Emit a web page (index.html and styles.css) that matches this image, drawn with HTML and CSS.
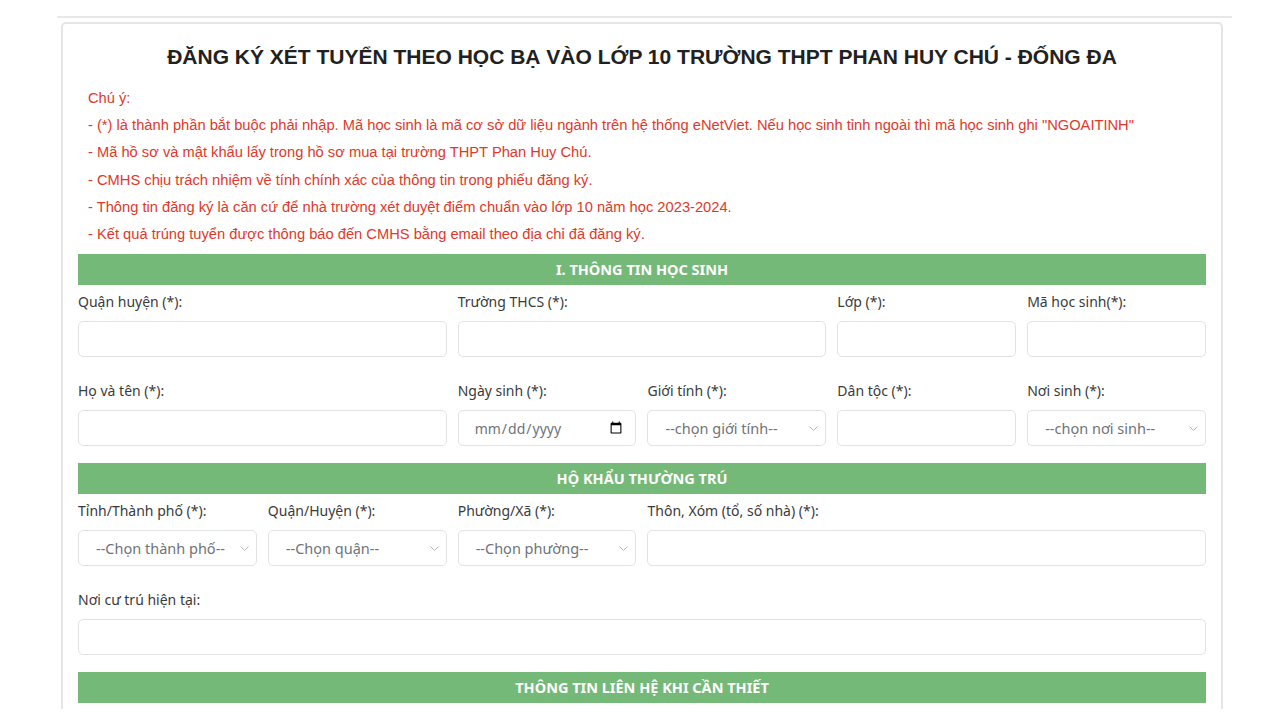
FILE: index.html
```html
<!DOCTYPE html>
<html lang="vi">
<head>
    <meta charset="UTF-8">
    <meta name="viewport" content="width=device-width, initial-scale=1.0">
    <title>Đăng ký xét tuyển lớp 10</title>
    <link rel="stylesheet" href="styles.css">
</head>
<body>
    <div class="page">
        <div class="top-line"></div>
        <div class="card">
            <h1 class="title">ĐĂNG KÝ XÉT TUYỂN THEO HỌC BẠ VÀO LỚP 10 TRƯỜNG THPT PHAN HUY CHÚ - ĐỐNG ĐA</h1>

            <div class="notes">
                <p>Chú ý:</p>
                <p>- (*) là thành phần bắt buộc phải nhập. Mã học sinh là mã cơ sở dữ liệu ngành trên hệ thống eNetViet. Nếu học sinh tỉnh ngoài thì mã học sinh ghi "NGOAITINH"</p>
                <p>- Mã hồ sơ và mật khẩu lấy trong hồ sơ mua tại trường THPT Phan Huy Chú.</p>
                <p>- CMHS chịu trách nhiệm về tính chính xác của thông tin trong phiếu đăng ký.</p>
                <p>- Thông tin đăng ký là căn cứ để nhà trường xét duyệt điểm chuẩn vào lớp 10 năm học 2023-2024.</p>
                <p>- Kết quả trúng tuyển được thông báo đến CMHS bằng email theo địa chỉ đã đăng ký.</p>
            </div>

            <div class="section-bar">I. THÔNG TIN HỌC SINH</div>
            <div class="form-row">
                <div class="field span-2">
                    <label>Quận huyện (*):</label>
                    <input type="text" class="form-control">
                </div>
                <div class="field span-2">
                    <label>Trường THCS (*):</label>
                    <input type="text" class="form-control">
                </div>
                <div class="field">
                    <label>Lớp (*):</label>
                    <input type="text" class="form-control">
                </div>
                <div class="field">
                    <label>Mã học sinh(*):</label>
                    <input type="text" class="form-control">
                </div>
            </div>
            <div class="form-row">
                <div class="field span-2">
                    <label>Họ và tên (*):</label>
                    <input type="text" class="form-control">
                </div>
                <div class="field">
                    <label>Ngày sinh (*):</label>
                    <input type="date" class="form-control date-input">
                </div>
                <div class="field">
                    <label>Giới tính (*):</label>
                    <div class="select-wrap">
                        <select class="form-control">
                            <option>--chọn giới tính--</option>
                        </select>
                        <svg class="chevron" width="9" height="5" viewBox="0 0 9 5"><path d="M0.5 0.5l4 4 4-4" fill="none" stroke="#b3b7bb" stroke-width="1"/></svg>
                    </div>
                </div>
                <div class="field">
                    <label>Dân tộc (*):</label>
                    <input type="text" class="form-control">
                </div>
                <div class="field">
                    <label>Nơi sinh (*):</label>
                    <div class="select-wrap">
                        <select class="form-control">
                            <option>--chọn nơi sinh--</option>
                        </select>
                        <svg class="chevron" width="9" height="5" viewBox="0 0 9 5"><path d="M0.5 0.5l4 4 4-4" fill="none" stroke="#b3b7bb" stroke-width="1"/></svg>
                    </div>
                </div>
            </div>

            <div class="section-bar">HỘ KHẨU THƯỜNG TRÚ</div>
            <div class="form-row">
                <div class="field">
                    <label>Tỉnh/Thành phố (*):</label>
                    <div class="select-wrap">
                        <select class="form-control">
                            <option>--Chọn thành phố--</option>
                        </select>
                        <svg class="chevron" width="9" height="5" viewBox="0 0 9 5"><path d="M0.5 0.5l4 4 4-4" fill="none" stroke="#b3b7bb" stroke-width="1"/></svg>
                    </div>
                </div>
                <div class="field">
                    <label>Quận/Huyện (*):</label>
                    <div class="select-wrap">
                        <select class="form-control">
                            <option>--Chọn quận--</option>
                        </select>
                        <svg class="chevron" width="9" height="5" viewBox="0 0 9 5"><path d="M0.5 0.5l4 4 4-4" fill="none" stroke="#b3b7bb" stroke-width="1"/></svg>
                    </div>
                </div>
                <div class="field">
                    <label>Phường/Xã (*):</label>
                    <div class="select-wrap">
                        <select class="form-control">
                            <option>--Chọn phường--</option>
                        </select>
                        <svg class="chevron" width="9" height="5" viewBox="0 0 9 5"><path d="M0.5 0.5l4 4 4-4" fill="none" stroke="#b3b7bb" stroke-width="1"/></svg>
                    </div>
                </div>
                <div class="field span-3">
                    <label>Thôn, Xóm (tổ, số nhà) (*):</label>
                    <input type="text" class="form-control">
                </div>
            </div>
            <div class="form-row">
                <div class="field span-6">
                    <label>Nơi cư trú hiện tại:</label>
                    <input type="text" class="form-control">
                </div>
            </div>

            <div class="section-bar">THÔNG TIN LIÊN HỆ KHI CẦN THIẾT</div>
        </div>
    </div>
</body>
</html>
```

FILE: styles.css
```css
* {
    margin: 0;
    padding: 0;
    box-sizing: border-box;
}

body {
    background: #fff;
    font-family: 'Noto Sans', 'Open Sans', sans-serif;
    color: #333;
    overflow: hidden;
}

.page {
    width: 1175px;
    margin-left: 57px;
    padding-top: 16px;
}

.top-line {
    height: 2px;
    background: #e6e7e8;
}

.card {
    margin: 4px 9px 0 4px;
    padding: 20px 15px 6px;
    border: 2px solid #e4e5e7;
    border-bottom: none;
    border-radius: 5px 5px 0 0;
}

.title {
    font-family: 'Liberation Sans', Arial, sans-serif;
    font-size: 21px;
    font-weight: bold;
    line-height: 25px;
    text-align: center;
    color: #212121;
    margin-bottom: 16px;
}

.notes {
    padding-left: 10px;
    margin-bottom: 6px;
}

.notes p {
    font-family: 'Liberation Sans', Arial, sans-serif;
    font-size: 14.7px;
    line-height: 27.2px;
    color: #e0392b;
}

.section-bar {
    height: 31px;
    line-height: 31px;
    background: #75b978;
    color: #fff;
    font-weight: bold;
    font-size: 14.5px;
    text-align: center;
}

.form-row {
    display: grid;
    grid-template-columns: repeat(6, 1fr);
    column-gap: 11px;
    margin-bottom: 17px;
}

.span-2 { grid-column: span 2; }
.span-3 { grid-column: span 3; }
.span-6 { grid-column: span 6; }

.field label {
    display: block;
    padding-top: 6px;
    line-height: 22px;
    margin-bottom: 8px;
    font-size: 14px;
    color: #3a3a3a;
}

.form-control {
    display: block;
    width: 100%;
    height: 36px;
    border: 1px solid #e2e3e5;
    border-radius: 5px;
    background: #fff;
    padding: 0 15px;
    font-family: 'Noto Sans', 'Open Sans', sans-serif;
    font-size: 14.5px;
    color: #6f7479;
    outline: none;
}

.date-input {
    font-size: 14px;
    padding-right: 10px;
}

.select-wrap {
    position: relative;
}

.select-wrap select {
    appearance: none;
    -webkit-appearance: none;
    padding-left: 17px;
}

.chevron {
    position: absolute;
    right: 8px;
    top: 16px;
    pointer-events: none;
}
```
